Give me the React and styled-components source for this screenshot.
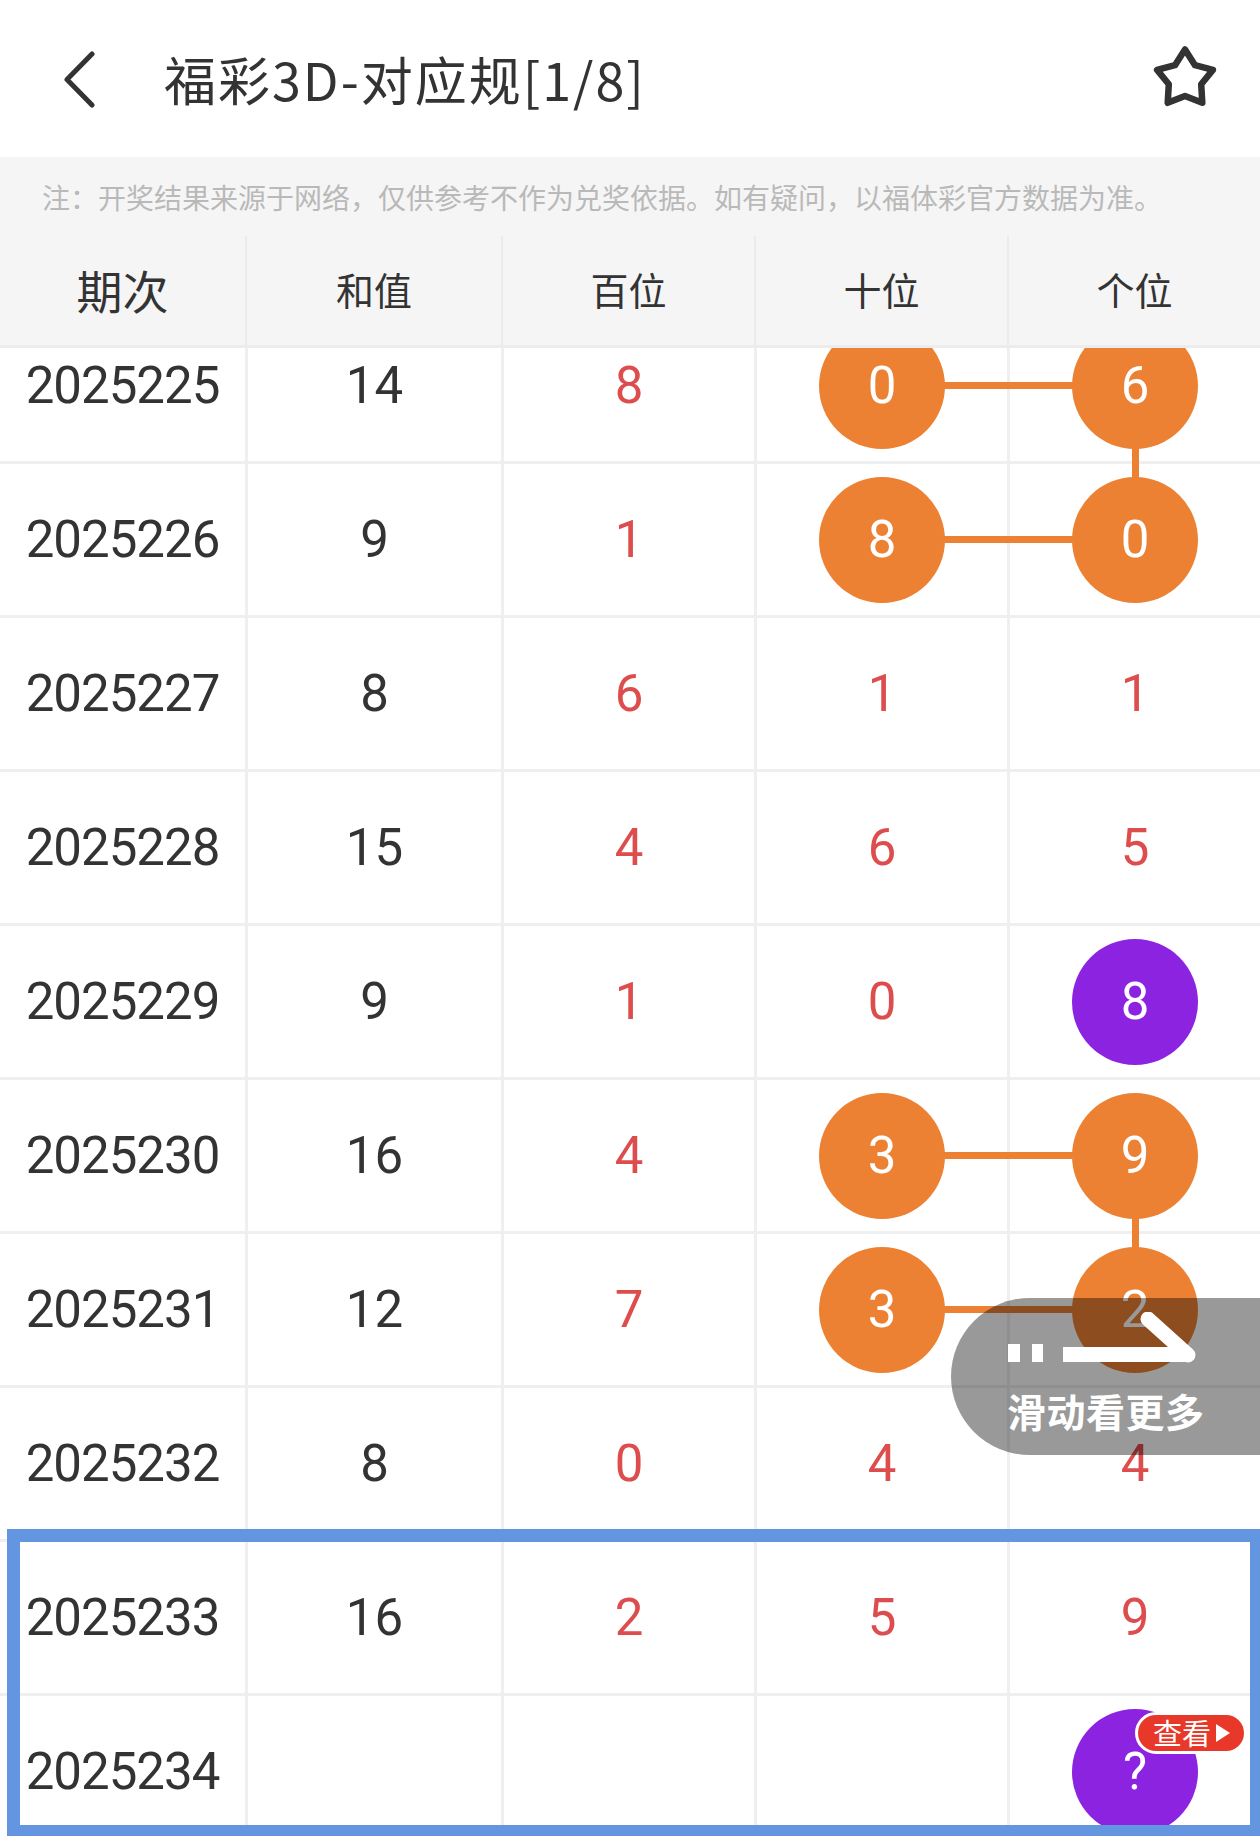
import React from 'react';
import styled, { createGlobalStyle, css } from 'styled-components';

const GlobalStyle = createGlobalStyle`
  html, body { margin: 0; padding: 0; background: #ffffff; }
  * { box-sizing: border-box; }
`;

const CJK = `"Noto Sans CJK SC", "Noto Sans", sans-serif`;
const NUM = `Roboto, "Noto Sans", sans-serif`;
const COLS = '245px 256px 253px 253px 253px';

const Page = styled.div`
  width: 1260px;
  height: 1836px;
  overflow: hidden;
  display: flex;
  flex-direction: column;
  background: #fff;
  font-family: ${CJK};
`;

const TopBar = styled.header`
  height: 157px;
  flex: none;
  display: flex;
  align-items: center;
  padding: 0 40px 0 64px;
  background: #fff;
`;

const Title = styled.h1`
  margin: 0 0 0 66px;
  flex: 1;
  font-family: ${CJK};
  font-weight: 400;
  font-size: 52px;
  line-height: 1;
  color: #333;
  letter-spacing: 2px;
`;

const InfoPanel = styled.div`
  flex: none;
  background: #f5f5f5;
`;

const Note = styled.p`
  margin: 0;
  height: 79px;
  display: flex;
  align-items: center;
  padding-left: 42px;
  font-size: 28px;
  color: #b9b9b9;
  white-space: nowrap;
`;

const HeadRow = styled.div`
  display: grid;
  grid-template-columns: ${COLS};
  height: 112px;
  border-bottom: 3px solid #ececec;
`;

const HeadCell = styled.div`
  display: flex;
  align-items: center;
  justify-content: center;
  padding-bottom: 3px;
  color: #333;
  font-size: ${(p) => (p.$big ? '46px' : '38px')};
  line-height: 1;
  border-left: ${(p) => (p.$first ? 'none' : '2px solid #ebebeb')};
`;

const Body = styled.div`
  flex: 1;
  position: relative;
  overflow: hidden;
  background: #fff;
`;

const RowList = styled.div`
  margin-top: -38px;
`;

const Row = styled.div`
  display: grid;
  grid-template-columns: ${COLS};
  height: 154px;
`;

const Cell = styled.div`
  position: relative;
  display: flex;
  align-items: center;
  justify-content: center;
  border-bottom: 3px solid #efefef;
  border-left: ${(p) => (p.$first ? 'none' : '3px solid #efefef')};
  font-family: ${NUM};
  font-size: 51px;
  letter-spacing: ${(p) => (p.$first ? '-1px' : '0')};
  line-height: 1;
  color: ${(p) => (p.$red ? '#dd4d4d' : '#333')};
`;

const ballColors = { orange: '#ed8133', purple: '#8b23e0' };

const Ball = styled.div`
  position: relative;
  z-index: 2;
  width: 126px;
  height: 126px;
  border-radius: 50%;
  background: ${(p) => ballColors[p.$kind]};
  color: #fff;
  display: flex;
  align-items: center;
  justify-content: center;
  font-family: ${NUM};
  font-size: 51px;
  line-height: 1;
`;

const linkBase = css`
  position: absolute;
  z-index: 1;
  background: #ed8133;
  pointer-events: none;
`;

const HLink = styled.span`
  ${linkBase};
  left: 50%;
  top: calc(50% - 3.5px);
  width: calc(100% + 3px);
  height: 7px;
`;

const VLink = styled.span`
  ${linkBase};
  top: 50%;
  left: calc(50% - 3.5px);
  width: 7px;
  height: 154px;
`;

const Badge = styled.span`
  position: absolute;
  top: 3px;
  left: 63px;
  width: 112px;
  height: 42px;
  border-radius: 21px;
  border: 3px solid #fff;
  background: #e8382a;
  display: flex;
  align-items: center;
  justify-content: center;
  gap: 5px;
  padding-left: 1px;
  font-family: ${CJK};
  font-size: 29px;
  line-height: 1;
  color: #fff;
  white-space: nowrap;
`;

const Triangle = styled.span`
  width: 0;
  height: 0;
  border-top: 9px solid transparent;
  border-bottom: 9px solid transparent;
  border-left: 14px solid #fff;
`;

const Highlight = styled.div`
  position: relative;
  &::after {
    content: '';
    position: absolute;
    top: -13px;
    left: 7px;
    right: -3px;
    bottom: 12px;
    border: 13px solid #6495e0;
    z-index: 3;
    pointer-events: none;
  }
`;

const SwipeHint = styled.div`
  position: absolute;
  z-index: 5;
  top: 950px;
  right: 0;
  width: 309px;
  height: 157px;
  border-radius: 79px 0 0 79px;
  background: rgba(0, 0, 0, 0.4);
  padding: 14px 0 0 56px;
  display: flex;
  flex-direction: column;
  pointer-events: none;
`;

const SwipeText = styled.span`
  margin-top: 25px;
  font-family: ${CJK};
  font-weight: 700;
  font-size: 39px;
  line-height: 1;
  color: #fff;
  letter-spacing: 0.5px;
`;

const BackIcon = () => (
  <svg width="34" height="60" viewBox="0 0 34 60" fill="none">
    <polyline points="28,5 3,30.5 28,56" stroke="#333" strokeWidth="5" strokeLinecap="round" strokeLinejoin="round" />
  </svg>
);

const StarIcon = () => (
  <svg width="70" height="70" viewBox="0 0 70 70" fill="none">
    <polygon
      points="35,5.5 45,21.2 62.9,25.9 51.2,40.2 52.3,58.8 35,52 17.7,58.8 18.8,40.2 7.1,25.9 25,21.2"
      stroke="#333"
      strokeWidth="6.5"
      strokeLinejoin="round"
    />
  </svg>
);

const SwipeIcon = () => (
  <svg width="192" height="54" viewBox="0 0 192 54">
    <rect x="1" y="32" width="12" height="18" fill="#fff" />
    <rect x="25" y="32" width="11" height="18" fill="#fff" />
    <path d="M56 35 H180 A7.5 7.5 0 0 1 180 50 H56 Z" fill="#fff" />
    <line x1="141" y1="7" x2="181" y2="43" stroke="#fff" strokeWidth="15" strokeLinecap="round" />
  </svg>
);

const rows = [
  { p: '2025225', s: '14', d: ['8', { v: '0', k: 'orange', h: true }, { v: '6', k: 'orange', down: true }] },
  { p: '2025226', s: '9', d: ['1', { v: '8', k: 'orange', h: true }, { v: '0', k: 'orange' }] },
  { p: '2025227', s: '8', d: ['6', '1', '1'] },
  { p: '2025228', s: '15', d: ['4', '6', '5'] },
  { p: '2025229', s: '9', d: ['1', '0', { v: '8', k: 'purple' }] },
  { p: '2025230', s: '16', d: ['4', { v: '3', k: 'orange', h: true }, { v: '9', k: 'orange', down: true }] },
  { p: '2025231', s: '12', d: ['7', { v: '3', k: 'orange', h: true }, { v: '2', k: 'orange' }] },
  { p: '2025232', s: '8', d: ['0', '4', '4'] },
  { p: '2025233', s: '16', d: ['2', '5', '9'] },
  { p: '2025234', s: '', d: ['', '', { v: '?', k: 'purple', badge: true }] },
];

const DigitCell = ({ item }) => {
  if (typeof item === 'string') {
    return <Cell $red>{item}</Cell>;
  }
  return (
    <Cell>
      {item.h && <HLink />}
      {item.down && <VLink />}
      <Ball $kind={item.k}>
        {item.v}
        {item.badge && (
          <Badge>
            查看
            <Triangle />
          </Badge>
        )}
      </Ball>
    </Cell>
  );
};

const DataRow = ({ r }) => (
  <Row>
    <Cell $first>{r.p}</Cell>
    <Cell>{r.s}</Cell>
    {r.d.map((item, i) => (
      <DigitCell key={i} item={item} />
    ))}
  </Row>
);

export default function App() {
  const main = rows.slice(0, 8);
  const highlighted = rows.slice(8);
  return (
    <>
      <GlobalStyle />
      <Page>
        <TopBar>
          <BackIcon />
          <Title>福彩3D-对应规[1/8]</Title>
          <StarIcon />
        </TopBar>
        <InfoPanel>
          <Note>注：开奖结果来源于网络，仅供参考不作为兑奖依据。如有疑问，以福体彩官方数据为准。</Note>
          <HeadRow>
            <HeadCell $first $big>期次</HeadCell>
            <HeadCell>和值</HeadCell>
            <HeadCell>百位</HeadCell>
            <HeadCell>十位</HeadCell>
            <HeadCell>个位</HeadCell>
          </HeadRow>
        </InfoPanel>
        <Body>
          <RowList>
            {main.map((r) => (
              <DataRow key={r.p} r={r} />
            ))}
            <Highlight>
              {highlighted.map((r) => (
                <DataRow key={r.p} r={r} />
              ))}
            </Highlight>
          </RowList>
          <SwipeHint>
            <SwipeIcon />
            <SwipeText>滑动看更多</SwipeText>
          </SwipeHint>
        </Body>
      </Page>
    </>
  );
}
